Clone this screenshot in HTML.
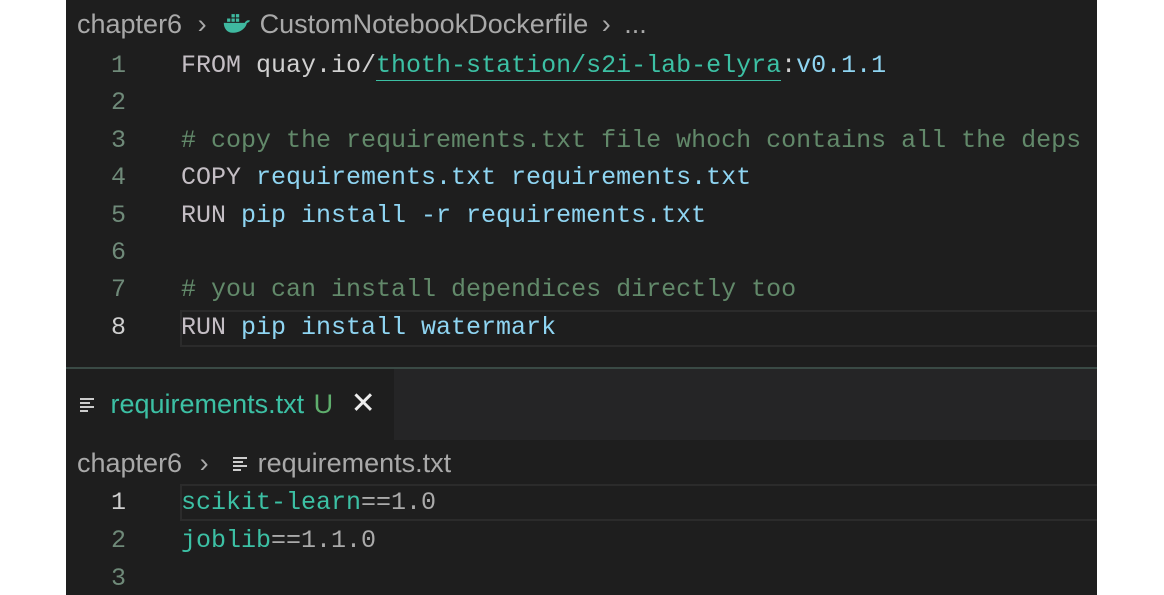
<!DOCTYPE html>
<html><head><style>
body{margin:0;width:1164px;height:595px;background:#fff;position:relative;overflow:hidden;font-family:"Liberation Sans",sans-serif}
#ed{position:absolute;left:66px;top:0;width:1031px;height:595px;background:#1e1e1e;overflow:hidden}
.bc{position:absolute;left:11px;font-size:27px;color:#a9a9a9;white-space:nowrap;height:32px;line-height:32px}
.ln{position:absolute;left:0;width:60px;text-align:right;font-family:"Liberation Mono",monospace;font-size:25px;color:#6f8a79}
.code{position:absolute;left:115px;font-family:"Liberation Mono",monospace;font-size:25px;white-space:pre;color:#c4bec4}
.row{position:absolute;left:0;height:37px;line-height:37px;width:1031px}
.k{color:#c4bec4}.a{color:#8fd5f2}.c{color:#62896a}.t{color:#3cc0a4}
.cur{position:absolute;left:114px;width:920px;border:2px solid #2b2b2b;box-sizing:border-box}
</style></head><body>
<div id="ed">
<div class="bc" style="top:8px">chapter6 <span style="margin:0 8px">&#8250;</span>
<svg width="30" height="22" viewBox="0 0 26 20" style="vertical-align:-2px"><path d="M1 9h19c1-2 3-3 5-2-1 1-2 2-3 2-1 5-6 9-13 9-5 0-8-4-8-9z" fill="#3fb9a0"/><rect x="4" y="5" width="3" height="3" fill="#3fb9a0"/><rect x="8" y="5" width="3" height="3" fill="#3fb9a0"/><rect x="12" y="5" width="3" height="3" fill="#3fb9a0"/><rect x="8" y="1" width="3" height="3" fill="#3fb9a0"/><rect x="12" y="1" width="3" height="3" fill="#3fb9a0"/></svg>
 CustomNotebookDockerfile <span style="margin:0 6px">&#8250;</span> ...</div>
<div class="cur" style="top:310px;height:37px"></div>
<div style="position:absolute;top:47px;left:0;width:1031px">
<div class="row" style="top:0"><div class="ln">1</div><div class="code"><span class="k">FROM </span><span style="color:#d0d0d0">quay.io/</span><span class="t" style="border-bottom:1px solid #3cc0a4">thoth-station/s2i-lab-elyra</span><span style="color:#d0d0d0">:</span><span class="a">v0.1.1</span></div></div>
<div class="row" style="top:37.4px"><div class="ln">2</div></div>
<div class="row" style="top:74.8px"><div class="ln">3</div><div class="code c"># copy the requirements.txt file whoch contains all the deps</div></div>
<div class="row" style="top:112.2px"><div class="ln">4</div><div class="code"><span class="k">COPY </span><span class="a">requirements.txt requirements.txt</span></div></div>
<div class="row" style="top:149.6px"><div class="ln">5</div><div class="code"><span class="k">RUN </span><span class="a">pip install -r requirements.txt</span></div></div>
<div class="row" style="top:187px"><div class="ln">6</div></div>
<div class="row" style="top:224.4px"><div class="ln">7</div><div class="code c"># you can install dependices directly too</div></div>
<div class="row" style="top:261.8px"><div class="ln" style="color:#cfcfcf">8</div><div class="code"><span class="k">RUN </span><span class="a">pip install watermark</span></div></div>
</div>
<div style="position:absolute;top:367px;left:0;width:1031px;height:2px;background:#3a4a45"></div>
<div style="position:absolute;top:369px;left:328px;width:703px;height:71px;background:#252526"></div>
<div class="bc" style="top:388px;left:13px;color:#3cc0a4">
<svg width="18" height="16" viewBox="0 0 18 16" style="vertical-align:0"><path d="M1 2h14M1 6h10M1 10h14M1 14h8" stroke="#ccc" stroke-width="2"/></svg>
<span style="margin-left:6px">requirements.txt</span> <span style="color:#5fae6d;margin-left:2px">U</span>
<span style="color:#eee;margin-left:10px;font-size:30px">&#x2715;</span></div>
<div class="bc" style="top:447px">chapter6 <span style="margin:0 10px">&#8250;</span>
<svg width="18" height="16" viewBox="0 0 18 16" style="vertical-align:0;margin-left:6px"><path d="M1 2h14M1 6h10M1 10h14M1 14h8" stroke="#ccc" stroke-width="2"/></svg>
 requirements.txt</div>
<div class="cur" style="top:484px;height:37px"></div>
<div style="position:absolute;top:484px;left:0;width:1031px">
<div class="row" style="top:0"><div class="ln" style="color:#cfcfcf">1</div><div class="code"><span class="t">scikit-learn</span><span style="color:#aaa">==1.0</span></div></div>
<div class="row" style="top:38px"><div class="ln">2</div><div class="code"><span class="t">joblib</span><span style="color:#aaa">==1.1.0</span></div></div>
<div class="row" style="top:76px"><div class="ln">3</div></div>
</div>
</div>
</body></html>
